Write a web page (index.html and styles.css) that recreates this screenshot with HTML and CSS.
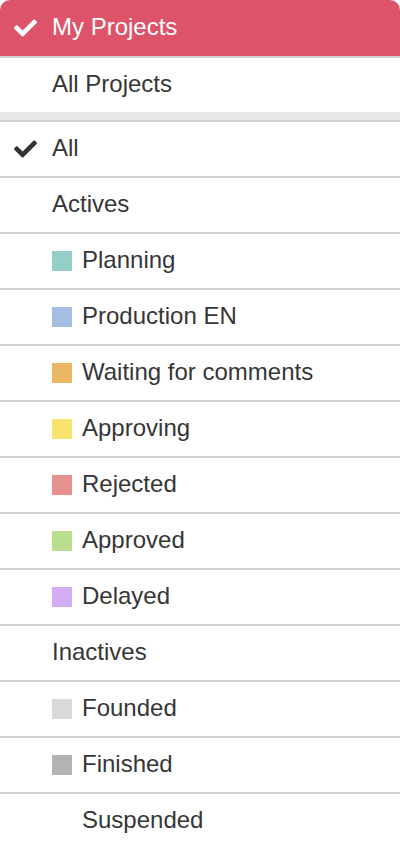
FILE: index.html
```html
<!DOCTYPE html>
<html lang="en">
<head>
<meta charset="utf-8">
<title>Projects filter</title>
<link rel="stylesheet" href="styles.css">
</head>
<body>
<div class="menu">
  <ul class="group">
    <li class="item item-active">
      <span class="mark"><svg class="check" viewBox="0 64 512 384"><path d="M173.898 439.404l-166.4-166.4c-9.997-9.997-9.997-26.206 0-36.204l36.203-36.204c9.997-9.998 26.207-9.998 36.204 0L192 312.69 432.095 72.596c9.997-9.997 26.207-9.997 36.204 0l36.203 36.204c9.997 9.997 9.997 26.206 0 36.204l-294.4 294.401c-9.998 9.997-26.207 9.997-36.204-.001z"/></svg></span>
      <span class="label">My Projects</span>
    </li>
    <li class="item item-last-group">
      <span class="mark"></span>
      <span class="label">All Projects</span>
    </li>
  </ul>
  <div class="band"></div>
  <ul class="group">
    <li class="item">
      <span class="mark"><svg class="check" viewBox="0 64 512 384"><path d="M173.898 439.404l-166.4-166.4c-9.997-9.997-9.997-26.206 0-36.204l36.203-36.204c9.997-9.998 26.207-9.998 36.204 0L192 312.69 432.095 72.596c9.997-9.997 26.207-9.997 36.204 0l36.203 36.204c9.997 9.997 9.997 26.206 0 36.204l-294.4 294.401c-9.998 9.997-26.207 9.997-36.204-.001z"/></svg></span>
      <span class="label">All</span>
    </li>
    <li class="item"><span class="mark"></span><span class="label">Actives</span></li>
    <li class="item"><span class="mark"></span><span class="swatch sw-planning"></span><span class="label">Planning</span></li>
    <li class="item"><span class="mark"></span><span class="swatch sw-production"></span><span class="label">Production EN</span></li>
    <li class="item"><span class="mark"></span><span class="swatch sw-waiting"></span><span class="label">Waiting for comments</span></li>
    <li class="item"><span class="mark"></span><span class="swatch sw-approving"></span><span class="label">Approving</span></li>
    <li class="item"><span class="mark"></span><span class="swatch sw-rejected"></span><span class="label">Rejected</span></li>
    <li class="item"><span class="mark"></span><span class="swatch sw-approved"></span><span class="label">Approved</span></li>
    <li class="item"><span class="mark"></span><span class="swatch sw-delayed"></span><span class="label">Delayed</span></li>
    <li class="item"><span class="mark"></span><span class="label">Inactives</span></li>
    <li class="item"><span class="mark"></span><span class="swatch sw-founded"></span><span class="label">Founded</span></li>
    <li class="item"><span class="mark"></span><span class="swatch sw-finished"></span><span class="label">Finished</span></li>
    <li class="item item-end"><span class="mark"></span><span class="swatch sw-suspended"></span><span class="label">Suspended</span></li>
  </ul>
</div>
</body>
</html>
```

FILE: styles.css
```css
* { box-sizing: border-box; }

html, body {
  margin: 0;
  padding: 0;
  background: #ffffff;
}

body {
  font-family: "Liberation Sans", Arial, Helvetica, sans-serif;
  color: #363636;
}

.menu {
  width: 400px;
  height: 848px;
  background: #ffffff;
  border-radius: 10px;
  overflow: hidden;
}

.group {
  list-style: none;
  margin: 0;
  padding: 0;
}

.item {
  display: flex;
  align-items: center;
  height: 56px;
  padding-left: 14px;
  border-bottom: 2px solid #d1d1d1;
  font-size: 24px;
  line-height: 1;
}

.item-active {
  height: 58px;
  background: #dd536a;
  color: #ffffff;
}

.item-last-group {
  height: 54px;
  border-bottom: none;
}

.item-end {
  height: 54px;
  border-bottom: none;
}

.band {
  height: 10px;
  background: #e8e8e8;
  border-bottom: 2px solid #d1d1d1;
}

.mark {
  width: 38px;
  flex: none;
  display: flex;
  align-items: center;
}

.check {
  width: 23px;
  height: 18px;
  fill: #333333;
  display: block;
}

.item-active .check {
  fill: #ffffff;
}

.label {
  white-space: nowrap;
  position: relative;
  top: -1px;
}

.swatch {
  width: 20px;
  height: 20px;
  flex: none;
  margin-right: 10px;
}

.sw-planning { background: #93cfc8; }
.sw-production { background: #a5bfe4; }
.sw-waiting { background: #ebb765; }
.sw-approving { background: #f8e36c; }
.sw-rejected { background: #e5918d; }
.sw-approved { background: #b9df8f; }
.sw-delayed { background: #d4aef5; }
.sw-founded { background: #d9d9d9; }
.sw-finished { background: #b3b3b3; }
.sw-suspended { background: #ffffff; }
```
